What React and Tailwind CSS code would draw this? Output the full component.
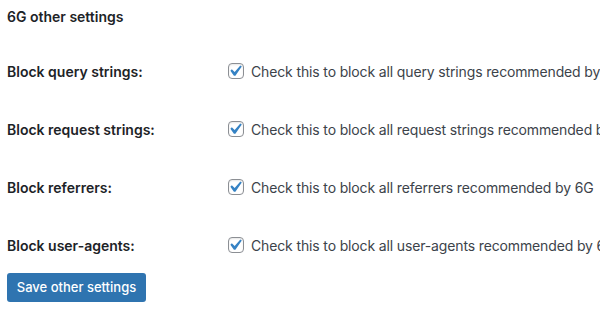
import React from 'react';

const rows = [
    { label: 'Block query strings:', text: 'Check this to block all query strings recommended by 6G' },
    { label: 'Block request strings:', text: 'Check this to block all request strings recommended by 6G' },
    { label: 'Block referrers:', text: 'Check this to block all referrers recommended by 6G' },
    { label: 'Block user-agents:', text: 'Check this to block all user-agents recommended by 6G' },
];

function Checkbox() {
    return (
        <span className="relative inline-block w-4 h-4 shrink-0 rounded-[4px] border border-[#8c8f94] bg-white shadow-[inset_0_1px_2px_rgba(0,0,0,0.1)]">
            <svg viewBox="0 0 20 20" className="absolute left-[-5px] top-[-4px] w-[22px] h-[22px]">
                <path d="M14.83 4.89l1.34.94-5.81 8.38H9.02L5.78 9.67l1.34-1.25 2.57 2.4z" fill="#3582c4" />
            </svg>
        </span>
    );
}

export default function App() {
    return (
        <div className="w-[600px] h-[314px] overflow-hidden bg-white pl-[7px] pt-[7px] text-[14px] text-[#1d2327] font-['Inter',sans-serif]">
            <h2 className="h-5 leading-5 font-semibold">6G other settings</h2>
            <div className="mt-[34px] flex flex-col gap-[38px]">
                {rows.map((row) => (
                    <div key={row.label} className="flex items-center h-5 whitespace-nowrap">
                        <div className="w-[221px] shrink-0 font-semibold">{row.label}</div>
                        <label className="flex items-center gap-[7px] text-[#3c434a]">
                            <Checkbox />
                            <span className="tracking-[-0.14px]">{row.text}</span>
                        </label>
                    </div>
                ))}
            </div>
            <button className="mt-[18px] h-[29px] w-[139px] rounded-[3px] bg-[#2f74b0] text-white text-[13px] font-medium leading-[29px]">
                Save other settings
            </button>
        </div>
    );
}
